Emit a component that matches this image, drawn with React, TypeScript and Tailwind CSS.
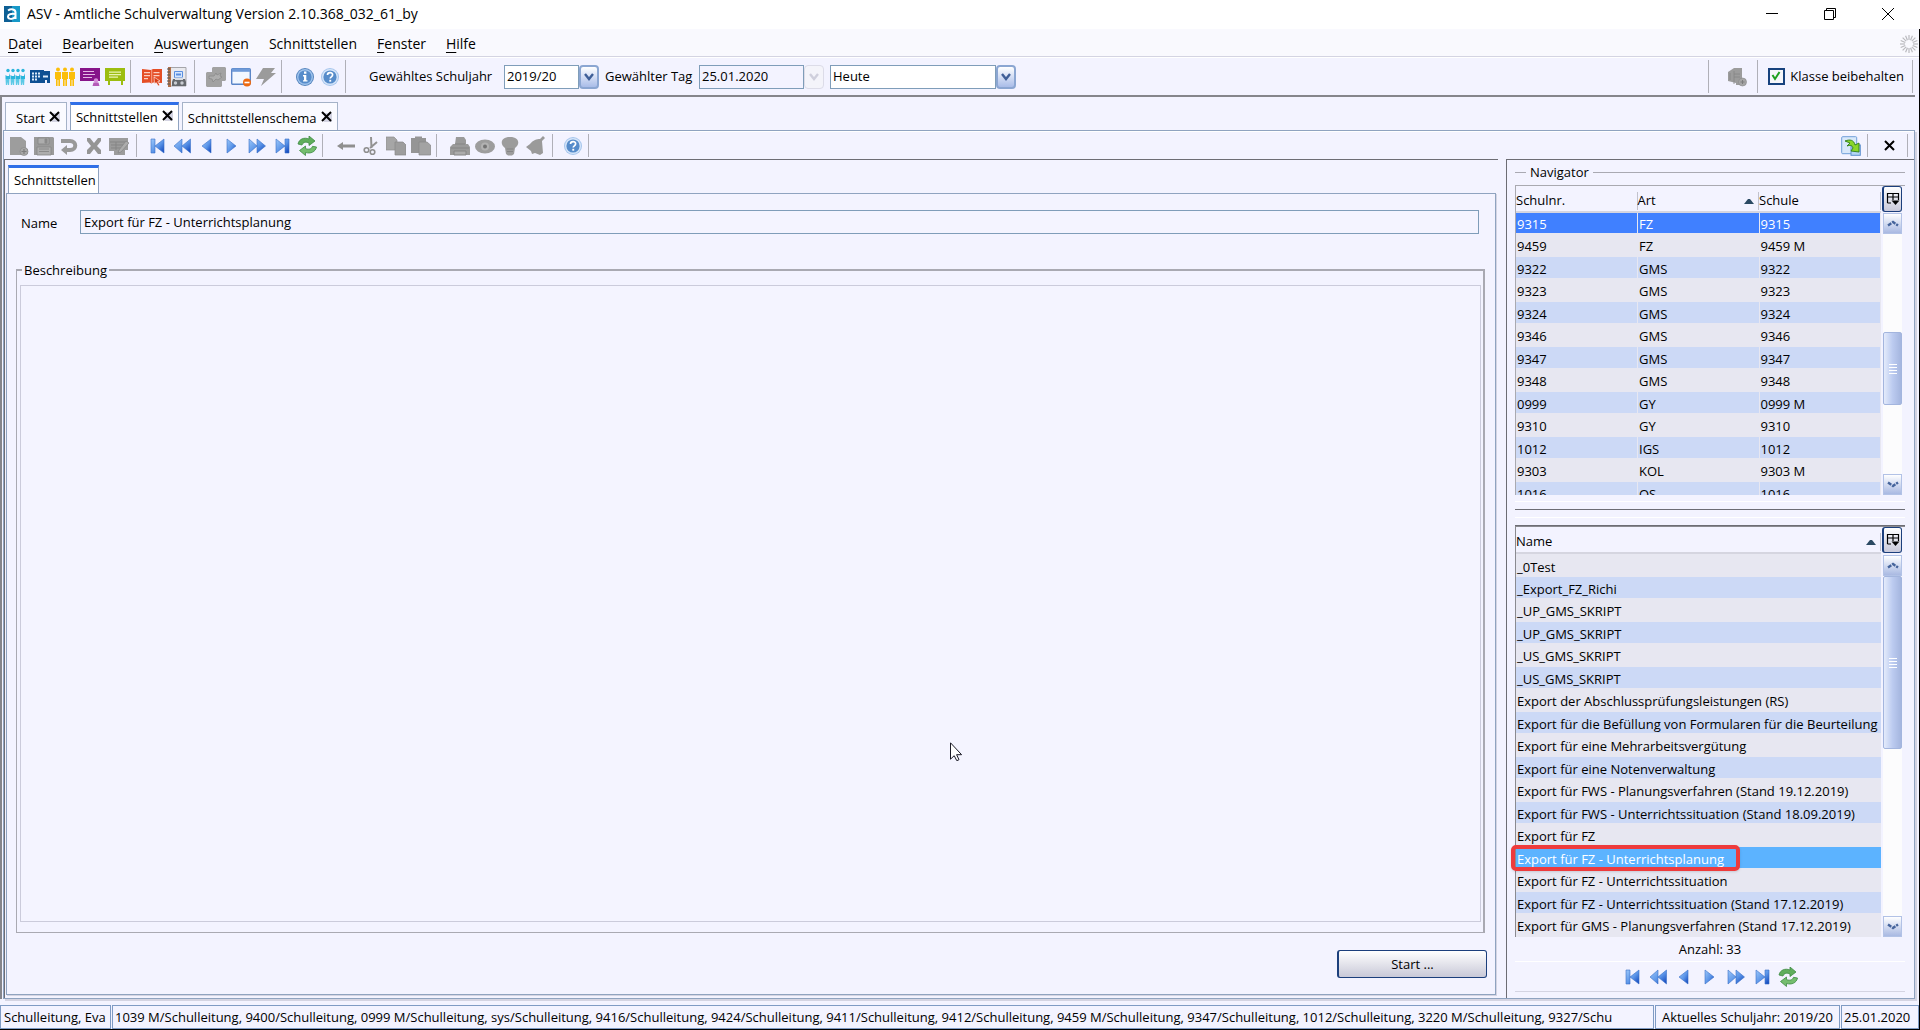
import type { FC, ReactNode } from "react";

const menuItems = [
  { key: "D", rest: "atei" },
  { key: "B", rest: "earbeiten" },
  { key: "A", rest: "uswertungen" },
  { key: "", rest: "Schnittstellen" },
  { key: "F", rest: "enster" },
  { key: "H", rest: "ilfe" },
];

const schools = [
  ["9315", "FZ", "9315"],
  ["9459", "FZ", "9459 M"],
  ["9322", "GMS", "9322"],
  ["9323", "GMS", "9323"],
  ["9324", "GMS", "9324"],
  ["9346", "GMS", "9346"],
  ["9347", "GMS", "9347"],
  ["9348", "GMS", "9348"],
  ["0999", "GY", "0999 M"],
  ["9310", "GY", "9310"],
  ["1012", "IGS", "1012"],
  ["9303", "KOL", "9303 M"],
  ["1016", "OS", "1016"],
];

const selectedExport = "Export für FZ - Unterrichtsplanung";
const exportNames = [
  "_0Test",
  "_Export_FZ_Richi",
  "_UP_GMS_SKRIPT",
  "_UP_GMS_SKRIPT",
  "_US_GMS_SKRIPT",
  "_US_GMS_SKRIPT",
  "Export der Abschlussprüfungsleistungen (RS)",
  "Export für die Befüllung von Formularen für die Beurteilung",
  "Export für eine Mehrarbeitsvergütung",
  "Export für eine Notenverwaltung",
  "Export für FWS - Planungsverfahren (Stand 19.12.2019)",
  "Export für FWS - Unterrichtssituation (Stand 18.09.2019)",
  "Export für FZ",
  selectedExport,
  "Export für FZ - Unterrichtssituation",
  "Export für FZ - Unterrichtssituation (Stand 17.12.2019)",
  "Export für GMS - Planungsverfahren (Stand 17.12.2019)",
];

const roles =
  "1039 M/Schulleitung, 9400/Schulleitung, 0999 M/Schulleitung, sys/Schulleitung, 9416/Schulleitung, 9424/Schulleitung, 9411/Schulleitung, 9412/Schulleitung, 9459 M/Schulleitung, 9347/Schulleitung, 1012/Schulleitung, 3220 M/Schulleitung, 9327/Schu";

const Svg: FC<{ children: ReactNode }> = ({ children }) => (
  <svg viewBox="0 0 20 20" className="h-5 w-5 shrink-0" aria-hidden="true">
    {children}
  </svg>
);

const peopleIcon = (
  <Svg>
    {[2.5, 7.5, 12.5, 17.5].map((x) => (
      <g key={x} fill="#2bb5dc">
        <circle cx={x + 0.5} cy={3.5} r={1.7} />
        <path d={`M${x - 2} 8l1.500 1h2L${x + 2.5} 6v6H${x - 2}z`} />
        <path d={`M${x - 2} 12h4l-.4 6h-1.200l-.4-3-.4 3h-1.200z`} fill="#5cc9e6" />
      </g>
    ))}
  </Svg>
);
const buildingIcon = (
  <Svg>
    <path d="M0 3h14v1h6v12h-3v-3h-2v3H0z" fill="#0d4f93" />
    <path d="M2 5.500h2v2H2zm3 0h2v2H5zm3 0h2v2H8zM2 8.500h2v2H2zm3 0h2v2H5zm3 0h2v2H8zM2 11.500h2v2H2zm3 0h2v2H5zm8-3h5v2h-5z" fill="#dbeafa" />
  </Svg>
);
const familyIcon = (
  <Svg>
    {[3, 10, 17].map((x) => (
      <g key={x} fill="#fbbe0a">
        <circle cx={x} cy={2.6} r={2} />
        <path d={`M${x - 3} 5h6v7h-1v7h-1.600v-6h-.8v6h-1.600v-7h-1z`} />
      </g>
    ))}
  </Svg>
);
const boardIcon = (
  <Svg>
    <path d="M0 1h20v13H0z" fill="#86148a" />
    <path d="M3 4h11v1H3zm0 3h12v1H3zm0 3h9v1H3z" fill="#e4b9e6" />
    <circle cx="16" cy="13.500" r="2.200" fill="#d58cd8" />
    <path d="M12.500 19l1-3.500h5l1 3.500z" fill="#b45ab8" />
  </Svg>
);
const signIcon = (
  <Svg>
    <path d="M0 1h20v13h-2v4h-2v-4H5v4H3v-4H0z" fill="#9cbd10" />
    <path d="M4 4.500h12v1.200H4zM4 7h12v1.200H4zM4 9.500h9v1.200H4z" fill="#e9f4b5" />
  </Svg>
);
const bookIcon = (
  <Svg>
    <path d="M0 2l9 1 2-1 9 0v14l-9-.5-1.500 1-2-1L0 16z" fill="#e54e26" />
    <path d="M2 5h6v1.200H2zm0 3h6v1.200H2zm0 3h4v1.200H2zM11.500 5h6v1.200h-6zm0 3h6v1.200h-6z" fill="#fbd0c2" />
    <path d="M9.700 3v13" stroke="#f6a48e" />
    <path d="M12 10l6 4-2.300.6 2 3.400-1.500 1-2-3.500L12.500 17z" fill="#d83a14" stroke="#fff" strokeWidth=".6" />
  </Svg>
);
const notebookIcon = (
  <Svg>
    <path d="M2 .500h17v18.500H2z" fill="#e9e9ee" stroke="#a5a5aa" />
    <path d="M1 0h3v20H1z" fill="#b0704a" />
    <path d="M0 2h3M0 5h3M0 8h3M0 11h3M0 14h3M0 17h3" stroke="#555" />
    <path d="M7.500 4.500h8v6h-8z" fill="#d5e6fd" stroke="#5a8fe0" />
    <path d="M9 6.500h5v2H9z" fill="#5a8fe0" />
    <path d="M6 12h12l1 3v4H5v-4z" fill="#66696e" />
    <path d="M8 10.500h8V13H8z" fill="#d9dde4" />
    <circle cx="8.500" cy="16" r="1.700" fill="#c9ccd2" />
    <circle cx="15" cy="16" r="1.700" fill="#c9ccd2" />
  </Svg>
);
const puzzleIcon = (
  <Svg>
    <path d="M7 0h12l1 1v12l-1 1h-3v5l-1 1H1l-1-1V6l1-1h5V1z" fill="#a2a2a2" />
    <path d="M3 9h5l2-3 1 2 4-2-1 3 2 1-4 3-2-1-3 3-1-3-3-.5z" fill="#aeaeae" stroke="#8a8a8a" strokeWidth=".8" />
  </Svg>
);
const windowIcon = (
  <Svg>
    <rect x=".7" y="1.700" width="18.600" height="15.600" rx="1" fill="#f3f8ff" stroke="#5b86c8" strokeWidth="1.400" />
    <path d="M1 1.500h18v3.300H1z" fill="#6f9ad8" />
    <circle cx="16" cy="15.500" r="4" fill="#ee6a10" />
    <path d="M13.500 14.700h5v1.600h-5z" fill="#fff" />
  </Svg>
);
const boltIcon = (
  <Svg>
    <path d="M7 1h12l-4 5h5L5 19l3-7H0z" fill="#9b9b9b" />
  </Svg>
);

// round blue button used for info and help
const RoundIcon: FC<{ light?: boolean; info?: boolean }> = ({ light, info }) => (
  <Svg>
    <circle cx="10" cy="10" r="9" fill={light ? "#a5c5ec" : "#5484bd"} />
    <circle cx="10" cy="10" r="8" fill={light ? "#d5e5f9" : "#9fc3ec"} />
    <circle cx="10" cy="10" r="6.600" fill="#568cca" />
    {info ? (
      <path d="M9 4.500h2.400v2.200H9zM8 8h3.300v5.200h1.200v1.400H8v-1.400h1V9.400H8z" fill="#fff" />
    ) : (
      <g>
        <path d="M7.500 8c0-3.200 5.200-3.200 5.100-.2 0 2-2.400 2-2.400 3.800" fill="none" stroke="#fff" strokeWidth="1.700" />
        <path d="M9.300 12.800h1.900v1.900H9.300z" fill="#fff" />
      </g>
    )}
  </Svg>
);

const newIcon = (
  <Svg>
    <path d="M1 1h11l5 4v8h2v5h-4v1H1z" fill="#9d9d9d" />
    <circle cx="15" cy="15.500" r="4" fill="#a8a8a8" stroke="#888" strokeWidth=".7" />
    <path d="M12.500 15.500h5M15 13v5" stroke="#7d7d7d" strokeWidth="1.200" />
  </Svg>
);
const saveIcon = (
  <Svg>
    <path d="M0 1h19l1 1v17H0z" fill="#9a9a9a" />
    <path d="M4 2h11v6H4zM3 11h14v8H3z" fill="#adadad" stroke="#868686" strokeWidth=".8" />
    <path d="M11 3h2v4h-2zM5 13h10M5 15.500h10" stroke="#8a8a8a" fill="#8a8a8a" />
  </Svg>
);
const undoIcon = (
  <Svg>
    <path d="M2 5h9c7 0 7 9 0 9H7" fill="none" stroke="#999" strokeWidth="4" />
    <path d="M8 9v10l-6-5z" fill="#999" />
  </Svg>
);
const deleteIcon = (
  <Svg>
    <path d="M3 2l3 0 4 5 4-5 3 0v3l-4 5 4 4v4h-3l-4-5-4 5H3v-4l4-4-4-5z" fill="#959595" />
  </Svg>
);
const editIcon = (
  <Svg>
    <path d="M0 2h19v12h-3v5H5v-4H0z" fill="#9c9c9c" />
    <path d="M1 6h17M7 6v8M2 9h13M2 12h10" stroke="#858585" />
    <path d="M17 5l3 2-8 9-3 1 1-3z" fill="#adadad" stroke="#858585" strokeWidth=".7" />
  </Svg>
);

const BlueDefs: FC = () => (
  <svg width="0" height="0" className="absolute" aria-hidden="true">
    <defs>
      <linearGradient id="blue" x1="0" x2="1" y1="0" y2="1">
        <stop offset="0" stopColor="#9cc8fa" />
        <stop offset=".55" stopColor="#5a94e8" />
        <stop offset="1" stopColor="#0a3fb8" />
      </linearGradient>
    </defs>
  </svg>
);
const navIcons = [
  { label: "Erster", d: "M4 3h4v14H4zM17 3v14L8 10z" },
  { label: "Zurück blättern", d: "M10 3v14L2 10zM18.500 3v14L10 10z" },
  { label: "Zurück", d: "M14 3v14L5 10z" },
  { label: "Weiter", d: "M5 3v14l9-7z" },
  { label: "Vor blättern", d: "M2 3v14l8-7zM10 3v14l8.500-7z" },
  { label: "Letzter", d: "M4 3v14l9-7zM13 3h4v14h-4z" },
];
const refreshIcon = (
  <Svg>
    <path d="M1 8c1-5 6-7 11-5V0l6 5-6 4.500V7C9 5.500 6 6 5 9z" fill="#5fae5c" stroke="#3c8a41" strokeWidth=".8" />
    <path d="M19.500 11c-1 5-6 7-11 5.500V19.500l-6-5 6-4.500v2.500c3 1.300 6 .7 7-2.200z" fill="#74bd6e" stroke="#3c8a41" strokeWidth=".8" />
  </Svg>
);
const leftArrowIcon = (
  <Svg>
    <path d="M1 10l6-4v2.500h12v3H7V14z" fill="#8f8f8f" />
  </Svg>
);
const cutIcon = (
  <Svg>
    <path d="M10 1l.5 11M16 6l-7 6" stroke="#939393" strokeWidth="2" />
    <circle cx="5.500" cy="14" r="2.300" fill="none" stroke="#8f8f8f" strokeWidth="1.600" />
    <circle cx="11.500" cy="16" r="2.300" fill="none" stroke="#8f8f8f" strokeWidth="1.600" />
  </Svg>
);
const copyIcon = (
  <Svg>
    <path d="M0 1h8l3 3v10H0z" fill="#a6a6a6" stroke="#8e8e8e" strokeWidth=".7" />
    <path d="M9 6h8l3 3v10H9z" fill="#9d9d9d" stroke="#868686" strokeWidth=".7" />
  </Svg>
);
const pasteIcon = (
  <Svg>
    <path d="M0 2h4V.500h7V2h4v15H0z" fill="#959595" />
    <path d="M8 6h8l3.500 3v10H8z" fill="#a3a3a3" stroke="#868686" strokeWidth=".7" />
  </Svg>
);
const printIcon = (
  <Svg>
    <path d="M6 1h8l2 3v4h2l2 3v8H0v-8l3-3h2z" fill="#9a9a9a" />
    <path d="M5 8h10M1 12h18M4 15h12v4H4z" stroke="#848484" fill="#ababab" />
  </Svg>
);
const eyeIcon = (
  <Svg>
    <ellipse cx="10" cy="10.500" rx="10" ry="7" fill="#9d9d9d" />
    <circle cx="10" cy="10.500" r="4" fill="#b2b2b2" />
    <circle cx="10" cy="10.500" r="2" fill="#747474" />
  </Svg>
);
const bulbIcon = (
  <Svg>
    <path d="M10 1c10 0 10 8 5 11l-1 6-2 1.500H8L6 18l-1-6C0 9 0 1 10 1z" fill="#9c9c9c" />
    <path d="M6.500 13h7M7 15.500h6" stroke="#858585" />
  </Svg>
);
const bellIcon = (
  <Svg>
    <path d="M18 0l2 2-3 3 1 12-3 2-5-2-3 1-1-3-5-4 4-3C8 4 12 3 15 3z" fill="#9a9a9a" />
  </Svg>
);
const databaseIcon = (
  <Svg>
    <path d="M1 5l6-4h8v12h2v5H9v-2L1 14z" fill="#9c9c9c" />
    <path d="M7 4v13M7 7h6M7 10h6M3 6v7" stroke="#868686" strokeWidth=".8" />
    <circle cx="15.500" cy="15" r="4" fill="#a6a6a6" stroke="#888" strokeWidth=".6" />
    <path d="M13.500 15h4M15.500 13v4" stroke="#7d7d7d" />
  </Svg>
);
const switchIcon = (
  <Svg>
    <rect x=".7" y=".7" width="15" height="17" rx="1" fill="#d8e8fa" stroke="#6f9fd8" />
    <rect x="10" y="9" width="9.300" height="10.300" fill="#b5d5f4" stroke="#5d8fce" />
    <path d="M4 5c5-2 9-1 10 4l4-2v9l-8-1 2-3c-1-3-3-3-6-2l3-3z" fill="#8ad62a" stroke="#2e7d1a" strokeWidth=".9" />
  </Svg>
);

const IconButton: FC<{ label: string; children: ReactNode }> = ({ label, children }) => (
  <button type="button" aria-label={label} className="h-5 w-5 shrink-0">
    {children}
  </button>
);

const NavButtons: FC = () => (
  <>
    {navIcons.map((n) => (
      <IconButton key={n.label} label={n.label}>
        <Svg>
          <path d={n.d} fill="url(#blue)" stroke="#3a70c8" strokeWidth=".6" />
        </Svg>
      </IconButton>
    ))}
    <IconButton label="Aktualisieren">{refreshIcon}</IconButton>
  </>
);

const DropArrow: FC<{ disabled?: boolean }> = ({ disabled }) => (
  <span
    className={
      disabled
        ? "flex w-5 items-center justify-center rounded-sm border border-[#dcdce8] bg-[#f4f4fa] text-[#cfcfdc]"
        : "flex w-5 items-center justify-center rounded-sm border-2 border-[#8ba6d2] bg-linear-to-b from-white to-[#a9bce8] text-[#3f5f97]"
    }
    aria-hidden="true"
  >
    <svg viewBox="0 0 10 8" className="h-2 w-2.5">
      <path d="M1 1l4 5 4-5" fill="none" stroke="currentColor" strokeWidth="2.400" />
    </svg>
  </span>
);

const CloseMark: FC = () => (
  <svg viewBox="0 0 11 11" className="h-[11px] w-[11px]" aria-hidden="true">
    <path d="M3 2h8v9H3z" fill="#d4d4e2" />
    <path d="M1 1l9 9M10 1l-9 9" stroke="#000" strokeWidth="2" />
  </svg>
);

const ColumnButton: FC = () => (
  <button
    type="button"
    aria-label="Spalten wählen"
    className="flex h-[26px] w-5 shrink-0 items-center justify-center rounded-[3px] border border-l-2 border-[#1c3f7c] bg-linear-to-b from-white to-[#c9c9da]"
  >
    <svg viewBox="0 0 14 14" className="h-3.5 w-3.5" aria-hidden="true">
      <path d="M1.500 11V1.500h11V8M1.500 5h11M7 1.500V8M1.500 11H5" fill="none" stroke="#000" strokeWidth="1.200" />
      <path d="M5.500 8.500h8L9.500 13z" />
    </svg>
  </button>
);

const ScrollButton: FC<{ down?: boolean }> = ({ down }) => (
  <button
    type="button"
    aria-label={down ? "Nach unten" : "Nach oben"}
    className="flex h-[21px] shrink-0 items-center justify-center border border-[#b2c2e6] bg-linear-to-b from-white to-[#a9b9e2]"
  >
    <svg viewBox="0 0 12 7" className="h-[7px] w-3" aria-hidden="true">
      <path d={down ? "M1 1.500l5 3.500 5-3.500" : "M1 5.500L6 2l5 3.500"} fill="none" stroke="#45649c" strokeWidth="2.400" strokeDasharray="4 1" />
    </svg>
  </button>
);

const Scrollbar: FC<{ before: string; thumb: string }> = ({ before, thumb }) => (
  <div className="flex h-full w-[19px] shrink-0 flex-col bg-[#fcfcfd]">
    <ScrollButton />
    <div className="min-h-0 flex-1">
      <div className={before} />
      <div className={thumb}>
        <span className="h-px w-2 bg-white" />
        <span className="h-px w-2 bg-white" />
        <span className="h-px w-2 bg-white" />
        <span className="h-px w-2 bg-white" />
      </div>
    </div>
    <ScrollButton down />
  </div>
);

const SortMark: FC = () => (
  <svg viewBox="0 0 10 6" className="h-1.5 w-2.5" aria-hidden="true">
    <path d="M0 6l4-5h2l4 5z" fill="#2b4a63" />
  </svg>
);

const SchoolTable: FC = () => (
  <div className="flex h-[310px] shrink-0 border-t border-l border-[#a9a9b0]">
    <div className="min-w-0 flex-1 overflow-hidden">
      <table className="w-full table-fixed border-collapse text-left">
        <thead>
          <tr className="h-[26px] border-b-2 border-[#d5d5e0]">
            {["Schulnr.", "Art", "Schule"].map((h) => (
              <th key={h} className="p-0 pt-1 font-normal" scope="col">
                <span className="flex h-[18px] items-center justify-between border-r border-[#c2c2cc] pr-1">
                  {h}
                  {h === "Art" && <SortMark />}
                </span>
              </th>
            ))}
          </tr>
        </thead>
        <tbody>
          {schools.map((row, i) => (
            <tr
              key={row[0]}
              className={
                i === 0
                  ? "h-[21px] bg-[#4080ff] text-white"
                  : i % 2
                    ? "h-6 bg-[#e7e7f1]"
                    : "h-[21px] bg-[#ccd9f6]"
              }
            >
              {row.map((cell, c) => (
                <td key={c} className="border-r border-[#e7e7f1] p-0 pt-0.5 pl-px leading-[18px]">
                  {cell}
                </td>
              ))}
            </tr>
          ))}
        </tbody>
      </table>
    </div>
    <div className="ml-px flex w-[23px] shrink-0 flex-col">
      <ColumnButton />
      <div className="min-h-0 flex-1 pt-px pl-px">
        <Scrollbar
          before="h-[41%]"
          thumb="flex h-[73px] flex-col items-center justify-center gap-0.5 rounded-xs border border-[#a3b5de] bg-linear-to-r from-[#e4ebfb] via-[#bccbf0] to-[#a5b6df]"
        />
      </div>
    </div>
  </div>
);

const ExportTable: FC = () => (
  <div className="flex min-h-0 flex-1 border-t border-l border-[#8a8a90]">
    <div className="min-w-0 flex-1">
      <table className="w-full table-fixed border-collapse text-left">
        <thead>
          <tr className="h-[26px] border-b-2 border-[#d5d5e0]">
            <th className="p-0 pt-1 font-normal" scope="col">
              <span className="flex h-[18px] items-center justify-between border-r border-[#c2c2cc] pr-1">
                Name
                <SortMark />
              </span>
            </th>
          </tr>
        </thead>
        <tbody>
          {exportNames.map((name, i) => (
            <tr
              key={i}
              className={
                name === selectedExport
                  ? "h-[21px] bg-[#5cb3ff] text-white"
                  : i % 2
                    ? "h-[21px] bg-[#ccd9f6]"
                    : "h-6 bg-[#e7e7f1]"
              }
            >
              <td className="relative p-0 pt-0.5 pl-px leading-[18px] whitespace-nowrap">
                {name}
                {name === selectedExport && (
                  <span className="absolute -top-0.5 -left-[5px] h-[26px] w-[229px] rounded-[5px] border-4 border-[#ee3b3c] shadow" />
                )}
              </td>
            </tr>
          ))}
        </tbody>
      </table>
    </div>
    <div className="ml-px flex w-[23px] shrink-0 flex-col">
      <ColumnButton />
      <div className="min-h-0 flex-1 pt-0.5 pl-px">
        <Scrollbar
          before="h-0"
          thumb="flex h-[51%] flex-col items-center justify-center gap-0.5 rounded-xs border border-[#a3b5de] bg-linear-to-r from-[#e4ebfb] via-[#bccbf0] to-[#a5b6df]"
        />
      </div>
    </div>
  </div>
);

const TitleBar: FC = () => (
  <header className="flex h-[29px] shrink-0 items-center bg-white pb-px pl-1 text-sm">
    <svg viewBox="0 0 16 16" className="h-4 w-4" aria-hidden="true">
      <path d="M0 0h16v16H0z" fill="#1799c8" />
      <path d="M0 0h8v16H0z" fill="#0d5f94" />
      <path d="M4 4.500c3-2 7.500-1.500 7.500 2V13M11 8c-4-.5-7 .3-7 2.600 0 3 5 3 7.200.2" fill="none" stroke="#fff" strokeWidth="2" />
    </svg>
    <h1 className="ml-[7px] flex-1">ASV - Amtliche Schulverwaltung Version 2.10.368_032_61_by</h1>
    <div className="flex items-center gap-[46px] pr-[26px]">
      <button type="button" aria-label="Minimieren">
        <svg width="12" height="12" aria-hidden="true">
          <path d="M0 5.500h12" stroke="#000" />
        </svg>
      </button>
      <button type="button" aria-label="Verkleinern">
        <svg width="12" height="12" fill="none" stroke="#000" aria-hidden="true">
          <path d="M.500 2.500h9v9h-9zM2.500 2.500v-2h9v9h-2" />
        </svg>
      </button>
      <button type="button" aria-label="Schließen">
        <svg width="12" height="12" stroke="#000" aria-hidden="true">
          <path d="M0 0l12 12M12 0L0 12" />
        </svg>
      </button>
    </div>
  </header>
);

const MenuBar: FC = () => (
  <nav className="flex h-7 shrink-0 items-center gap-5 border-b border-[#d4d4e2] bg-[#f9f9fe] pt-0.5 pl-2 text-sm">
    {menuItems.map((m) => (
      <a key={m.rest} href="#" className="leading-5">
        {m.key && <u className="underline-offset-[3px]">{m.key}</u>}
        {m.rest}
      </a>
    ))}
    <svg viewBox="0 0 20 20" className="ml-auto h-5 w-5" aria-hidden="true">
      {Array.from({ length: 16 }, (_, i) => (
        <path key={i} d="M10 1v5" stroke="#b9b9be" strokeWidth="1.200" transform={`rotate(${i * 22.5} 10 10)`} />
      ))}
    </svg>
  </nav>
);

const MainToolbar: FC = () => (
  <div className="flex h-[38px] shrink-0 items-stretch border-t border-white py-[2px]">
    <div className="flex items-center gap-[5px] pl-[5px]">
      <IconButton label="Schüler">{peopleIcon}</IconButton>
      <IconButton label="Schule">{buildingIcon}</IconButton>
      <IconButton label="Lehrkräfte">{familyIcon}</IconButton>
      <IconButton label="Unterricht">{boardIcon}</IconButton>
      <IconButton label="Klassen">{signIcon}</IconButton>
      <span className="mr-1.5 w-px self-stretch bg-[#b0b0b8]" />
      <IconButton label="Katalog">{bookIcon}</IconButton>
      <IconButton label="Adressbuch">{notebookIcon}</IconButton>
      <span className="mr-1.5 ml-0.5 w-px self-stretch bg-[#b0b0b8]" />
      <IconButton label="Module">{puzzleIcon}</IconButton>
      <IconButton label="Fenster schließen">{windowIcon}</IconButton>
      <IconButton label="Schnellzugriff">{boltIcon}</IconButton>
      <span className="mr-2 w-px self-stretch bg-[#b0b0b8]" />
      <IconButton label="Info">
        <RoundIcon info />
      </IconButton>
      <IconButton label="Hilfe">
        <RoundIcon light />
      </IconButton>
      <span className="w-px self-stretch bg-[#b0b0b8]" />
    </div>
    <div className="flex flex-1 items-center pl-[23px]">
      <label htmlFor="schuljahr" className="w-[135px]">
        Gewähltes Schuljahr
      </label>
      <span className="flex h-6 w-[95px]">
        <select id="schuljahr" className="min-w-0 flex-1 appearance-none border border-[#7f9db9] bg-white px-0.5">
          <option>2019/20</option>
        </select>
        <DropArrow />
      </span>
      <label htmlFor="tag" className="ml-1.5 w-[94px] whitespace-nowrap">
        Gewählter Tag
      </label>
      <span className="flex h-6 w-[125px]">
        <input id="tag" readOnly value="25.01.2020" className="min-w-0 flex-1 border border-[#7f9db9] px-0.5" />
        <DropArrow disabled />
      </span>
      <span className="ml-1.5 flex h-6 w-[186px]">
        <select aria-label="Zeitpunkt" className="min-w-0 flex-1 appearance-none border border-[#7f9db9] bg-white px-0.5">
          <option>Heute</option>
        </select>
        <DropArrow />
      </span>
    </div>
    <div className="flex items-center pr-1.5">
      <span className="mr-[18px] w-px self-stretch bg-[#b0b0b8]" />
      <IconButton label="Datenbank">{databaseIcon}</IconButton>
      <span className="mr-2.5 ml-2.5 w-px self-stretch bg-[#b0b0b8]" />
      <label className="flex items-center gap-[5px] pr-2 whitespace-nowrap">
        <span className="relative h-[17px] w-[17px]">
          <input type="checkbox" defaultChecked className="peer block h-full w-full appearance-none border-2 border-[#17427e] bg-[#f6f6fa]" />
          <svg viewBox="0 0 17 17" className="pointer-events-none absolute inset-0 hidden peer-checked:block" aria-hidden="true">
            <path d="M4.500 7l2.500 4 4.500-7" fill="none" stroke="#1fa01f" strokeWidth="2" />
          </svg>
        </span>
        Klasse beibehalten
      </label>
      <span className="w-px self-stretch bg-[#b0b0b8]" />
    </div>
  </div>
);

const DocumentTabs: FC = () => (
  <div className="flex shrink-0 gap-[3px] pt-[5px] pl-0.5">
    <button type="button" className="flex h-7 items-center gap-1 border border-b-0 border-[#a5b2c8] bg-[#fafaff] pt-1 pr-1.5 pl-2.5">
      Start
      <span className="pb-1">
        <CloseMark />
      </span>
    </button>
    <button type="button" className="flex h-7 items-center gap-1 border border-t-[3px] border-b-0 border-[#8fa3c0] border-t-[#2f6fe8] bg-white px-[5px]">
      Schnittstellen
      <span className="pb-1">
        <CloseMark />
      </span>
    </button>
    <button type="button" className="flex h-7 items-center gap-1 border border-b-0 border-[#a5b2c8] bg-[#fafaff] px-[5px] pt-1">
      Schnittstellenschema
      <span className="pb-1">
        <CloseMark />
      </span>
    </button>
  </div>
);

const EditToolbar: FC = () => (
  <div className="flex h-7 shrink-0 items-center border-t border-white py-0.5 pl-[5px]">
    <div className="flex h-full items-center gap-[5px]">
      <IconButton label="Neu">{newIcon}</IconButton>
      <IconButton label="Speichern">{saveIcon}</IconButton>
      <IconButton label="Rückgängig">{undoIcon}</IconButton>
      <IconButton label="Löschen">{deleteIcon}</IconButton>
      <IconButton label="Bearbeiten">{editIcon}</IconButton>
      <span className="mr-[5px] ml-0.5 w-px self-stretch bg-[#b0b0b8]" />
      <NavButtons />
      <span className="mr-2 w-px self-stretch bg-[#b0b0b8]" />
      <IconButton label="Zurücksetzen">{leftArrowIcon}</IconButton>
      <IconButton label="Ausschneiden">{cutIcon}</IconButton>
      <IconButton label="Kopieren">{copyIcon}</IconButton>
      <IconButton label="Einfügen">{pasteIcon}</IconButton>
      <span className="mr-2 w-px self-stretch bg-[#b0b0b8]" />
      <IconButton label="Drucken">{printIcon}</IconButton>
      <IconButton label="Vorschau">{eyeIcon}</IconButton>
      <IconButton label="Hinweis">{bulbIcon}</IconButton>
      <IconButton label="Erinnerung">{bellIcon}</IconButton>
      <span className="mr-[5px] ml-0.5 w-px self-stretch bg-[#b0b0b8]" />
      <IconButton label="Kontexthilfe">
        <RoundIcon light />
      </IconButton>
      <span className="w-px self-stretch bg-[#b0b0b8]" />
    </div>
    <div className="ml-auto flex h-full items-center pr-1.5">
      <IconButton label="Ansicht wechseln">{switchIcon}</IconButton>
      <span className="mr-4 ml-1.5 w-px self-stretch bg-[#b0b0b8]" />
      <button type="button" aria-label="Ansicht schließen">
        <svg viewBox="0 0 11 11" className="h-[11px] w-[11px]" aria-hidden="true">
          <path d="M1 1l9 9M10 1l-9 9" stroke="#000" strokeWidth="2" />
        </svg>
      </button>
      <span className="ml-3 w-px self-stretch bg-[#b0b0b8]" />
    </div>
  </div>
);

const FormPanel: FC = () => (
  <section className="flex min-w-0 flex-1 flex-col border-t border-l border-[#6d6d74] pt-[5px] pb-[3px] pl-px">
    <div className="flex shrink-0 pl-0.5">
      <button type="button" className="h-7 border border-t-[3px] border-b-0 border-[#8fa3c0] border-t-[#2f6fe8] bg-white pr-0.5 pl-[5px]">
        Schnittstellen
      </button>
    </div>
    <div className="relative mr-0.5 flex min-h-0 flex-1 flex-col border border-[#8fa3c0] pt-4 pr-2 pb-4 pl-[9px] shadow-[1px_1px_0_#d4d4e2]">
      <div className="flex h-6 shrink-0 items-center pr-2 pl-[5px]">
        <label htmlFor="name" className="w-[59px] pt-1">
          Name
        </label>
        <input id="name" readOnly value={selectedExport} className="h-full min-w-0 flex-1 border border-[#7f9db9] bg-[#f4f4ff] px-[3px]" />
      </div>
      <fieldset className="mt-6 mr-0.5 flex min-h-0 flex-1 flex-col border border-t-2 border-r-2 border-[#a9a9b2] pr-0.5 pb-2.5 pl-[3px]">
        <legend className="ml-0.5 px-0.5 pt-0.5 leading-[21px]">
          <label htmlFor="beschreibung">Beschreibung</label>
        </legend>
        <textarea id="beschreibung" readOnly className="mt-1 block h-full w-full flex-1 resize-none border border-[#cbcbdb] bg-[#f4f4ff]" />
      </fieldset>
      <button
        type="button"
        className="mt-[17px] h-7 w-[150px] shrink-0 self-end rounded-[3px] border border-l-2 border-[#1c3f7c] bg-linear-to-b from-white to-[#c9c9d8] pt-0.5"
      >
        Start ...
      </button>
      {/* mouse pointer */}
      <svg viewBox="0 0 12 19" className="pointer-events-none absolute top-[68.5%] left-[63.4%] h-[19px] w-3" aria-hidden="true">
        <path d="M.500 .800v16.400l3.700-3.500 2.600 5 2.200-1-2.400-5h5z" fill="#fff" stroke="#1b1b26" />
      </svg>
    </div>
  </section>
);

const NavigatorPanel: FC = () => (
  <aside className="ml-2 flex w-[408px] shrink-0 flex-col border-t border-l border-[#6d6d74] pr-[9px] pl-2">
    <div className="flex h-[25px] shrink-0 items-center gap-1">
      <span className="h-px w-[11px] bg-[#a9a9b2]" />
      <h2>Navigator</h2>
      <span className="h-px flex-1 bg-[#a9a9b2]" />
    </div>
    <SchoolTable />
    <div className="mt-1.5 h-[9px] shrink-0 border-t border-b border-t-white border-b-[#6d6d74]" />
    <div className="mt-[7px] h-[9px] shrink-0 border-t border-b border-t-white border-b-[#6d6d74]" />
    <ExportTable />
    <p className="h-[25px] shrink-0 border-b border-white text-center leading-[25px]">Anzahl: 33</p>
    <div className="mb-1.5 flex h-[30px] shrink-0 items-center justify-center gap-1.5 border-b border-[#d4d4e2]">
      <NavButtons />
    </div>
  </aside>
);

const StatusBar: FC = () => (
  <footer className="flex h-[25px] shrink-0 gap-px border-b border-black leading-[23px] whitespace-nowrap">
    <span className="w-[111px] overflow-hidden border border-[#7f9bc4] px-[3px]">Schulleitung, Eva</span>
    <span className="min-w-0 flex-1 overflow-hidden border border-[#7f9bc4] px-0.5">{roles}</span>
    <span className="w-[185px] overflow-hidden border border-[#7f9bc4] px-1.5">Aktuelles Schuljahr: 2019/20</span>
    <span className="w-[78px] overflow-hidden border border-[#7f9bc4] px-0.5">25.01.2020</span>
  </footer>
);

const App: FC = () => (
  <div className="flex h-screen flex-col overflow-hidden bg-[#f3f3ff] font-['Open_Sans','Noto_Sans',sans-serif] text-[13px] text-black">
    <BlueDefs />
    <TitleBar />
    <div className="flex min-h-0 flex-1 flex-col border-r border-black">
      <MenuBar />
      <MainToolbar />
      <main className="mr-1 mb-1.5 flex min-h-0 flex-1 flex-col border-t-2 border-l-2 border-[#85858b] pl-px">
        <DocumentTabs />
        <div className="flex min-h-0 flex-1 flex-col border border-[#8fa3c0] shadow-[2px_2px_0_#d4d4e2]">
          <EditToolbar />
          <div className="flex min-h-0 flex-1">
            <FormPanel />
            <NavigatorPanel />
          </div>
        </div>
      </main>
      <StatusBar />
    </div>
  </div>
);

export default App;
